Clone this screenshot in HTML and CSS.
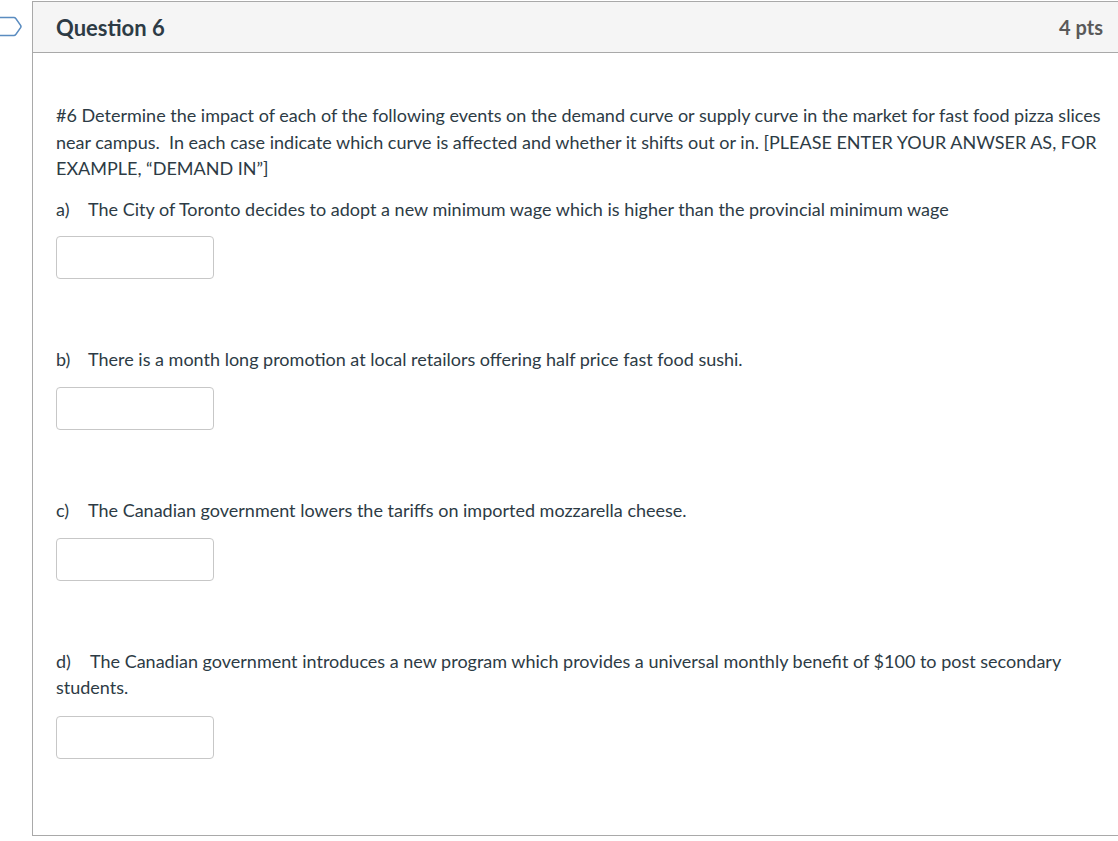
FILE: index.html
```html
<!DOCTYPE html>
<html lang="en">
<head>
<meta charset="utf-8">
<title>Question 6</title>
<link rel="stylesheet" href="styles.css">
</head>
<body>
<div class="page">
  <svg class="flag" width="24" height="22" viewBox="0 0 24 22" aria-hidden="true">
    <path d="M-6 1.5 H14 Q15 1.5 15.7 2.4 L20.6 9.4 Q21.3 10.5 20.6 11.6 L15.7 18.6 Q15 19.5 14 19.5 H-6" fill="none" stroke="#5a8cc0" stroke-width="1.6" stroke-linejoin="round"/>
  </svg>
  <div class="card">
    <div class="header">
      <span class="qname">Question 6</span>
      <span class="pts">4 pts</span>
    </div>
    <div class="body">
      <p class="intro">#6 Determine the impact of each of the following events on the demand curve or supply curve in the market for fast food pizza slices near campus.&nbsp; In each case indicate which curve is affected and whether it shifts out or in. [PLEASE ENTER YOUR ANWSER AS, FOR EXAMPLE, “DEMAND IN”]</p>

      <div class="item">
        <p class="prompt"><span class="lbl">a)</span>The City of Toronto decides to adopt a new minimum wage which is higher than the provincial minimum wage</p>
        <input class="answer" type="text" aria-label="Answer a">
      </div>

      <div class="item">
        <p class="prompt"><span class="lbl">b)</span>There is a month long promotion at local retailors offering half price fast food sushi.</p>
        <input class="answer" type="text" aria-label="Answer b">
      </div>

      <div class="item">
        <p class="prompt"><span class="lbl">c)</span>The Canadian government lowers the tariffs on imported mozzarella cheese.</p>
        <input class="answer" type="text" aria-label="Answer c">
      </div>

      <div class="item">
        <p class="prompt prompt-last"><span class="lbl lbl-d">d)</span>The Canadian government introduces a new program which provides a universal monthly benefit of $100 to post secondary students.</p>
        <input class="answer" type="text" aria-label="Answer d">
      </div>
    </div>
  </div>
</div>
</body>
</html>
```

FILE: styles.css
```css
html, body {
  margin: 0;
  padding: 0;
  background: #ffffff;
  overflow: hidden;
}

body {
  font-family: Lato, "Open Sans", "Liberation Sans", sans-serif;
  color: #2d3b45;
}

.page {
  position: relative;
  padding: 1px 0 0 32px;
  width: 1095px;
}

.flag {
  position: absolute;
  left: 0;
  top: 16px;
}

.card {
  width: 1095px;
  box-sizing: border-box;
  border: 1px solid #a9a9a9;
  background: #ffffff;
}

.header {
  height: 50px;
  background: #f5f5f5;
  border-bottom: 1px solid #a9a9a9;
  display: flex;
  align-items: center;
  justify-content: space-between;
  padding: 0 23px;
}

.qname {
  font-size: 22px;
  font-weight: 700;
  color: #2d3b45;
}

.pts {
  font-size: 20px;
  font-weight: 700;
  color: #595959;
}

.body {
  height: 782px;
  box-sizing: border-box;
  padding: 49px 23px 0 23px;
  font-size: 18px;
  line-height: 26.6px;
}

.intro {
  margin: 0 0 14px 0;
}

.item {
  display: flex;
  flex-direction: column;
  align-items: flex-start;
  margin-bottom: 67px;
}

.prompt {
  margin: 0 0 14px 0;
}

.prompt-last {
  margin-bottom: 15px;
}

.lbl {
  display: inline-block;
  width: 32px;
}

.lbl-d {
  width: 34px;
}

.answer {
  box-sizing: border-box;
  width: 158px;
  height: 43px;
  margin: 0;
  border: 1px solid #c7c7c7;
  border-radius: 4px;
  background: #ffffff;
  font: inherit;
}
```
